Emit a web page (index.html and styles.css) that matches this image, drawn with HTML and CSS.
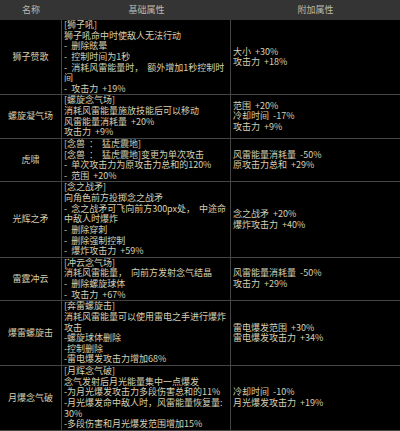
FILE: index.html
```html
<!DOCTYPE html>
<html lang="zh-CN">
<head>
<meta charset="utf-8">
<title>技能属性</title>
<link rel="stylesheet" href="styles.css">
</head>
<body>
<div class="table">
  <div class="th">名称</div>
  <div class="th">基础属性</div>
  <div class="th last">附加属性</div>

  <div class="name">狮子赞歌</div>
  <div class="base"><p>[狮子吼]</p><p>狮子吼命中时使敌人无法行动</p><p>- 删除眩晕</p><p>- 控制时间为1秒</p><p>- 消耗风雷能量时， 额外增加1秒控制时</p><p>间</p><p>- 攻击力 +19%</p></div>
  <div class="extra"><p>大小 +30%</p><p>攻击力 +18%</p></div>

  <div class="name">螺旋凝气场</div>
  <div class="base"><p>[螺旋念气场]</p><p>消耗风雷能量施放技能后可以移动</p><p>风雷能量消耗量 +20%</p><p>攻击力 +9%</p></div>
  <div class="extra"><p>范围 +20%</p><p>冷却时间 -17%</p><p>攻击力 +9%</p></div>

  <div class="name">虎啸</div>
  <div class="base"><p>[念兽 ： 猛虎震地]</p><p>[念兽 ： 猛虎震地]变更为单次攻击</p><p>- 单次攻击力为原攻击力总和的120%</p><p>- 范围 +20%</p></div>
  <div class="extra"><p>风雷能量消耗量 -50%</p><p>原攻击力总和 +29%</p></div>

  <div class="name">光辉之矛</div>
  <div class="base"><p>[念之战矛]</p><p>向角色前方投掷念之战矛</p><p>- 念之战矛可飞向前方300px处， 中途命</p><p>中敌人时爆炸</p><p>- 删除穿刺</p><p>- 删除强制控制</p><p>- 爆炸攻击力 +59%</p></div>
  <div class="extra"><p>念之战矛 +20%</p><p>爆炸攻击力 +40%</p></div>

  <div class="name">雷霆冲云</div>
  <div class="base"><p>[冲云念气场]</p><p>消耗风雷能量， 向前方发射念气结晶</p><p>- 删除螺旋球体</p><p>- 攻击力 +67%</p></div>
  <div class="extra"><p>风雷能量消耗量 -50%</p><p>攻击力 +29%</p></div>

  <div class="name">爆雷螺旋击</div>
  <div class="base"><p>[奔雷螺旋击]</p><p>消耗风雷能量可以使用雷电之手进行爆炸</p><p>攻击</p><p>-螺旋球体删除</p><p>-控制删除</p><p>-雷电爆发攻击力增加68%</p></div>
  <div class="extra"><p>雷电爆发范围 +30%</p><p>雷电爆发攻击力 +34%</p></div>

  <div class="name">月爆念气破</div>
  <div class="base"><p>[月辉念气破]</p><p>念气发射后月光能量集中一点爆发</p><p>-为月光爆发攻击力多段伤害总和的11%</p><p>-月光爆发命中敌人时，风雷能量恢复量:</p><p>30%</p><p>-多段伤害和月光爆发范围增加15%</p></div>
  <div class="extra"><p>冷却时间 -10%</p><p>月光爆发攻击力 +19%</p></div>
</div>
</body>
</html>
```

FILE: styles.css
```css
html, body {
  margin: 0;
  padding: 0;
  background: #000;
}
body {
  width: 400px;
  height: 431px;
  overflow: hidden;
  font-family: "Noto Sans CJK SC", "Noto Sans", sans-serif;
  font-size: 9px;
  color: #d6d0b2;
}
.table {
  display: grid;
  grid-template-columns: 62px 169px 169px;
}
.table > div {
  box-sizing: border-box;
  border-bottom: 1px solid #454545;
  border-right: 1px solid #454545;
  line-height: 10.625px;
  white-space: nowrap;
  word-spacing: 2px;
}
.table p {
  margin: 0;
  height: 10.625px;
  line-height: 10.625px;
}
.table > .th {
  height: 20px;
  background: #343434;
  color: #bdb8aa;
  display: flex;
  align-items: center;
  justify-content: center;
  border-bottom: 0;
  border-right: 0;
}
.table > .extra,
.table > .last {
  border-right: 0;
}
.name {
  display: flex;
  align-items: center;
  justify-content: center;
}
.base {
  padding: 0 2px;
}
.extra {
  display: flex;
  flex-direction: column;
  justify-content: center;
  padding: 0 2px;
}
```
